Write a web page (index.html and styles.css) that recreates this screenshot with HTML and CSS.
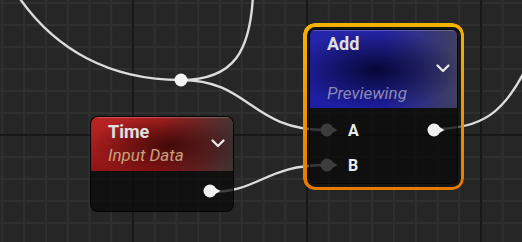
FILE: index.html
```html
<!DOCTYPE html>
<html lang="en">
<head>
<meta charset="UTF-8">
<title>Material Graph</title>
<link rel="stylesheet" href="styles.css">
</head>
<body>
<div class="graph">
    <!-- wires sit under the nodes -->
    <svg class="wires" width="522" height="242" viewBox="0 0 522 242">
        <path d="M18 -4 C55 50, 110 80, 181 80"/>
        <path d="M181 80 C235 80, 250 50, 253 -4"/>
        <path d="M181 80 C250 80, 250 130, 326 130"/>
        <path d="M210 192 C260 192, 265 165, 326 165"/>
        <path d="M434 129 C480 129, 505 115, 530 60"/>
        <circle class="knot" cx="181" cy="80" r="6.5"/>
    </svg>

    <div class="node time">
        <div class="head">
            <div class="titles">
                <div class="title">Time</div>
                <div class="sub">Input Data</div>
            </div>
            <svg class="chev" width="14" height="9" viewBox="0 0 14 9"><polyline points="1.5,1.5 7,7 12.5,1.5"/></svg>
        </div>
        <div class="body">
            <div class="row">
                <svg class="pin out push" width="18" height="14" viewBox="0 0 18 14"><circle cx="7" cy="7" r="6.5"/><polygon points="11,3.2 17.5,7 11,10.8"/></svg>
            </div>
        </div>
    </div>

    <div class="sel">
        <div class="node add">
            <div class="head">
                <div class="titles">
                    <div class="title">Add</div>
                    <div class="sub">Previewing</div>
                </div>
                <svg class="chev" width="14" height="9" viewBox="0 0 14 9"><polyline points="1.5,1.5 7,7 12.5,1.5"/></svg>
            </div>
            <div class="body">
                <div class="row">
                    <svg class="pin in" width="18" height="14" viewBox="0 0 18 14"><circle cx="7" cy="7" r="6.5"/><polygon points="11,3.2 17.5,7 11,10.8"/></svg>
                    <span class="label">A</span>
                    <svg class="pin out push" width="18" height="14" viewBox="0 0 18 14"><circle cx="7" cy="7" r="6.5"/><polygon points="11,3.2 17.5,7 11,10.8"/></svg>
                </div>
                <div class="row">
                    <svg class="pin in" width="18" height="14" viewBox="0 0 18 14"><circle cx="7" cy="7" r="6.5"/><polygon points="11,3.2 17.5,7 11,10.8"/></svg>
                    <span class="label">B</span>
                </div>
            </div>
        </div>
    </div>
</div>
</body>
</html>
```

FILE: styles.css
```css
html,body{margin:0;padding:0;}
body{font-family:Roboto,"Liberation Sans",sans-serif;color:#e2e2e2;}

.graph{
    position:relative;width:522px;height:242px;overflow:hidden;
    background-color:#262626;
    background-image:
        linear-gradient(90deg,#181818 2px,transparent 2px),
        linear-gradient(#181818 2px,transparent 2px),
        linear-gradient(90deg,#303030 2px,transparent 2px),
        linear-gradient(#303030 2px,transparent 2px);
    background-size:174px 176px,174px 176px,21.75px 22px,21.75px 22px;
    background-position:132px 134px,132px 134px,132px 134px,132px 134px;
}

.wires{position:absolute;left:0;top:0;}
.wires path{fill:none;stroke:#dcdcdc;stroke-width:2.4;}
.wires .knot{fill:#f2f2f2;}

/* nodes */
.node{box-sizing:border-box;display:flex;flex-direction:column;border:1px solid rgba(0,0,0,.85);overflow:hidden;}
.node .head{display:flex;align-items:center;box-shadow:inset 0 1px 0 rgba(255,255,255,.22);}
.node .titles{flex:1;display:flex;flex-direction:column;justify-content:space-between;height:100%;}
.node .title{font-size:18px;line-height:20px;font-weight:bold;color:#e0e0e0;}
.node .sub{font-size:17px;line-height:20px;font-style:italic;}
.chev polyline{fill:none;stroke:#ececec;stroke-width:2.2;stroke-linecap:round;stroke-linejoin:round;}
.node .body{flex:1;display:flex;flex-direction:column;gap:7px;}
.row{display:flex;align-items:center;height:28px;}
.push{margin-left:auto;}
.label{margin-left:10px;font-size:16px;font-weight:bold;color:#ececec;}
.pin.in{fill:#3c3c3c;}
.pin.out{fill:#f0f0f0;}

.time{
    position:absolute;left:90px;top:116px;width:144px;height:96px;border-radius:8px;
    background:rgba(10,10,10,.75);
}
.time .head{
    box-sizing:border-box;height:55px;padding:5px 8px 6px 17px;
    background:
        radial-gradient(ellipse 75px 34px at 78px 28px,rgba(50,6,6,.85),rgba(50,6,6,0)),
        linear-gradient(90deg,rgba(58,52,52,0) 50%,rgba(58,52,52,.96) 100%),
        linear-gradient(#bb2424,#8e1515);
}
.time .sub{color:#c9a07c;}
.time .body{padding:6px 12px 6px 10px;}

/* selected node with orange ring */
.sel{
    position:absolute;left:303px;top:23px;width:161px;height:167px;box-sizing:border-box;
    padding:6px;border-radius:12px;background:rgba(8,8,8,.55);
}
.sel::before{
    content:"";position:absolute;inset:0;border-radius:12px;padding:3.5px;
    background:linear-gradient(#f5b300,#e57b00);
    -webkit-mask:linear-gradient(#000 0 0) content-box,linear-gradient(#000 0 0);
    -webkit-mask-composite:xor;mask-composite:exclude;
}
.add{height:100%;border-radius:6px;background:rgba(10,10,10,.5);border-color:rgba(0,0,0,.6);}
.add .head{
    box-sizing:border-box;height:78px;padding:4px 7px 5px 17px;
    background:
        radial-gradient(ellipse 85px 40px at 66px 40px,rgba(4,4,42,.9),rgba(4,4,42,0)),
        linear-gradient(90deg,rgba(66,66,90,0) 50%,rgba(66,66,90,.92) 100%),
        linear-gradient(#2626aa,#1e1ea4);
}
.add .sub{color:#8a8ab6;}
.add .body{padding:8px 12px 4px 10px;}
```
